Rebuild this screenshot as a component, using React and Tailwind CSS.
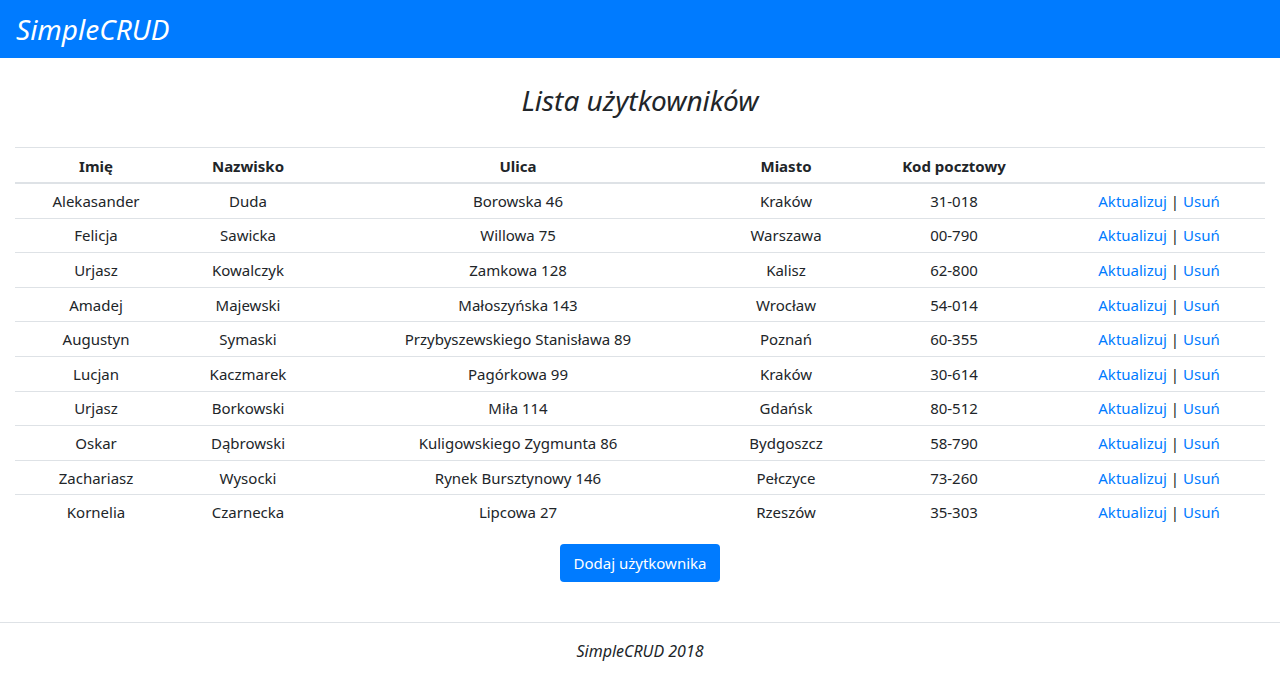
const users = [
  ["Alekasander", "Duda", "Borowska 46", "Kraków", "31-018"],
  ["Felicja", "Sawicka", "Willowa 75", "Warszawa", "00-790"],
  ["Urjasz", "Kowalczyk", "Zamkowa 128", "Kalisz", "62-800"],
  ["Amadej", "Majewski", "Małoszyńska 143", "Wrocław", "54-014"],
  ["Augustyn", "Symaski", "Przybyszewskiego Stanisława 89", "Poznań", "60-355"],
  ["Lucjan", "Kaczmarek", "Pagórkowa 99", "Kraków", "30-614"],
  ["Urjasz", "Borkowski", "Miła 114", "Gdańsk", "80-512"],
  ["Oskar", "Dąbrowski", "Kuligowskiego Zygmunta 86", "Bydgoszcz", "58-790"],
  ["Zachariasz", "Wysocki", "Rynek Bursztynowy 146", "Pełczyce", "73-260"],
  ["Kornelia", "Czarnecka", "Lipcowa 27", "Rzeszów", "35-303"],
];

function App() {
  return (
    <div className="min-h-[684px] bg-white font-['Noto_Sans',sans-serif] text-[15px] leading-6 text-[#212529]">
      <nav className="flex h-[58px] items-center bg-[#007bff] px-4">
        <span className="text-[28px] italic leading-[42px] text-white">SimpleCRUD</span>
      </nav>

      <main className="px-[15px]">
        <h3 className="pb-[30px] pt-[25px] text-center text-[28px] italic leading-[34px]">
          Lista użytkowników
        </h3>

        <table className="w-full table-fixed border-collapse text-center">
          <colgroup>
            <col className="w-[162px]" />
            <col className="w-[142px]" />
            <col className="w-[398px]" />
            <col className="w-[138px]" />
            <col className="w-[198px]" />
            <col className="w-[212px]" />
          </colgroup>
          <thead>
            <tr className="border-y border-[#dee2e6] [border-bottom-width:2px]">
              <th className="pb-[4px] pt-[6px] font-bold">Imię</th>
              <th className="pb-[4px] pt-[6px] font-bold">Nazwisko</th>
              <th className="pb-[4px] pt-[6px] font-bold">Ulica</th>
              <th className="pb-[4px] pt-[6px] font-bold">Miasto</th>
              <th className="pb-[4px] pt-[6px] font-bold">Kod pocztowy</th>
              <th className="pb-[4px] pt-[6px]"></th>
            </tr>
          </thead>
          <tbody>
            {users.map((u, i) => (
              <tr key={i} className={i > 0 ? "border-t border-[#dee2e6]" : ""}>
                {u.map((cell, j) => (
                  <td key={j} className="py-[4.8px]">
                    {cell}
                  </td>
                ))}
                <td className="py-[4.8px]">
                  <a href="#" className="text-[#007bff]">Aktualizuj</a> |{" "}
                  <a href="#" className="text-[#007bff]">Usuń</a>
                </td>
              </tr>
            ))}
          </tbody>
        </table>

        <div className="flex justify-center pt-[15px]">
          <button className="h-[38px] rounded-[4px] bg-[#007bff] px-[14px] text-[15px] text-white">
            Dodaj użytkownika
          </button>
        </div>
      </main>

      <footer className="mt-[40px] border-t border-[#dee2e6] py-4 text-center text-[16px] italic">
        SimpleCRUD 2018
      </footer>
    </div>
  );
}

export default App;
